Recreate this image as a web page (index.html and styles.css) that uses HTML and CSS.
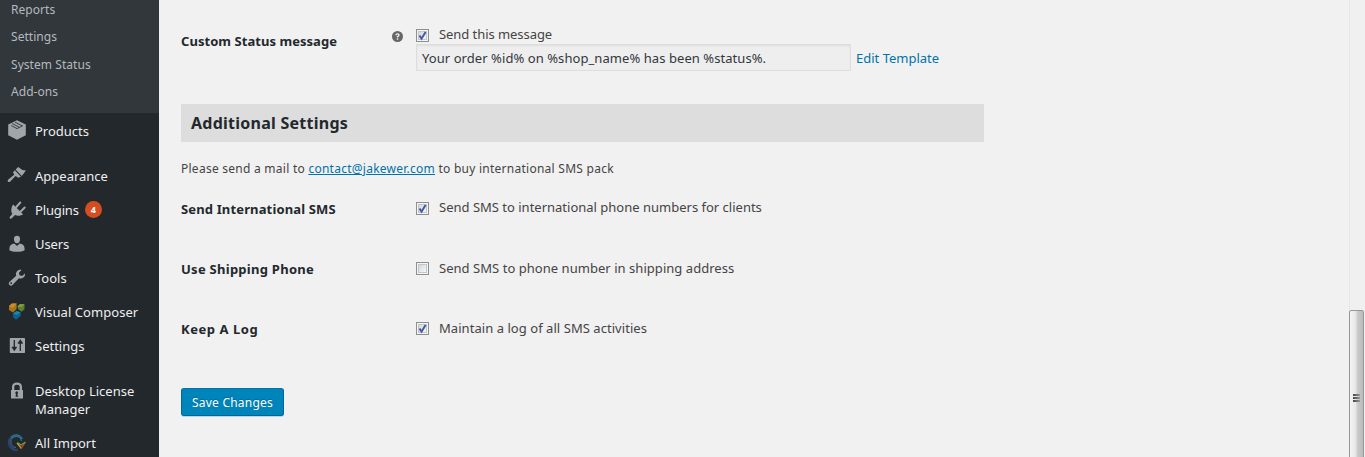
FILE: index.html
```html
<!DOCTYPE html>
<html lang="en">
<head>
<meta charset="utf-8">
<title>SMS Settings</title>
<link rel="stylesheet" href="styles.css">
</head>
<body>
<div class="page">
  <nav class="sidebar">
    <ul class="submenu">
      <li>Reports</li>
      <li>Settings</li>
      <li>System Status</li>
      <li>Add-ons</li>
    </ul>
    <ul class="menu">
      <li class="item first"><svg class="icon" viewBox="0 0 20 20"><path fill="#a0a5aa" d="M10 .3 1.2 4.600v10.600L10 19.700l8.800-4.500V4.600z"/><path fill="none" stroke="#23282d" stroke-width=".8" d="m4.300 5.600 5.700 3 6-3M5.200 3.500l7 3.700M8 2.100l7 3.700"/></svg><span class="products">Products</span></li>
      <li class="item after-gap"><svg class="icon" viewBox="0 0 20 20"><path fill="#a0a5aa" d="M11.200.9 8.600 3.500l6.200 6.500 4.100-5.600-3.500-.5zM7.800 4.300 6 6.200l1.200 2.600-5.900 4.600c-.9.900-.8 1.800-.2 2.300.6.500 1.500.4 2.200-.3L8.500 10l2.800 1.700 2.700-.9z"/></svg><span class="appearance">Appearance</span></li>
      <li class="item"><svg class="icon" viewBox="0 0 20 20"><path fill="#a0a5aa" d="M6.200 4.500 16 14.200c-1.900 1.500-5.200 2.100-8 .8l-3 3c-.7.800-1.400.8-1.900.4-.7-.5-.6-1.200 0-1.900l2.200-2.500C3.800 11.600 4 7 6.200 4.500z"/><path stroke="#a0a5aa" stroke-width="2" stroke-linecap="round" d="m9.300 7 4-4.500M13.700 11.500l4-4"/></svg><span class="plugins">Plugins</span><b class="badge">4</b></li>
      <li class="item"><svg class="icon" viewBox="0 0 20 20"><path fill="#a0a5aa" d="M10 9.300c-2 0-3.100-2.300-3.100-4.300C6.900 2.900 8.100 1.700 10 1.700S13.100 2.900 13.100 5c0 2-1.100 4.300-3.100 4.300zM7.300 9.600 10 12l2.700-2.400c3 .4 4.900 1.900 4.900 5.100v1.600c-2 1-4.600 1.500-7.600 1.500s-5.600-.5-7.600-1.500v-1.600c0-3.200 1.900-4.700 4.900-5.100z"/></svg><span class="users">Users</span></li>
      <li class="item"><svg class="icon" viewBox="0 0 20 20"><path fill="#a0a5aa" fill-rule="evenodd" d="M16.700 9.300c-1.300 1.300-3.200 1.600-4.800.9L5.500 17c-.8.800-2.100.9-3 .1-1-.9-.9-2.200-.1-3.100L9.200 7.700c-.6-1.600-.2-3.400 1-4.600 1.200-1.200 3-1.600 4.400-1.100l-2.700 2.700.6 2.600 2.700.7 2.600-2.600c.5 1.500.2 2.800-1.100 3.900zM4.800 14.400a.9.900 0 1 0-1.300 1.300.9.900 0 0 0 1.300-1.300z"/></svg><span class="tools">Tools</span></li>
      <li class="item"><svg class="icon" viewBox="0 0 20 20"><path fill="#a87518" d="m2 4 3-2.500h4.600V7L6 10.500 2 8z"/><path fill="#c98e24" d="m2 4 3-2.500h4.600L7 4.500 5.500 6z"/><path fill="#607d32" d="M10.300 4.500 13 2l4.500.3v4.900l-3 2.600-2.800-2z"/><path fill="#7da03c" d="M10.300 4.500 13 2l4.500.3-3 3z"/><path fill="#0d618a" d="M6 11.500 9.700 9l4 1.500V14L9 17.700 6 15z"/><path fill="#168aae" d="M6 11.500 9.700 9l4 1.500L10 13z"/></svg><span class="composer">Visual Composer</span></li>
      <li class="item"><svg class="icon" viewBox="0 0 20 20"><path fill="#a0a5aa" d="M3.500 2h13.800q.7 0 .7.700v13.600q0 .7-.7.700H3.500q-.7 0-.7-.7V2.700q0-.7.700-.7z"/><path fill="none" stroke="#23282d" stroke-width="1.300" d="M7.300 4v10.500M13.300 4.500V15M4.800 11.500h5M10.800 7h5M5.500 11.500l1.800 2.600 1.800-2.600M11.500 7l1.800-2.600L15.100 7"/></svg><span class="settings">Settings</span></li>
      <li class="item tall after-gap"><svg class="icon" viewBox="0 0 20 20"><path fill="#a0a5aa" fill-rule="evenodd" d="M15 9h1v8.500H4V9h1V6q0-4.500 5-4.500T15 6zM7.300 9h5.400V6q0-2.300-2.700-2.300T7.300 6zm3.500 5.800L10.400 13a1.400 1.400 0 1 0-1.400 0l-.5 2.800h3z"/></svg><span class="license">Desktop License<br>Manager</span></li>
      <li class="item"><svg class="icon" viewBox="0 0 20 20"><g fill="none"><path stroke="#27456a" stroke-width="2.400" d="M10.500 16.800A7.300 7.300 0 1 1 15.500 6"/><path stroke="#2e7387" stroke-width="1.200" d="M9 14.500A5.500 5.500 0 1 1 14.500 8M4 4.500q6-6 11 1.500"/><path stroke="#3d456f" stroke-width="1.500" d="M4.500 6q-2 6 3 9"/><path stroke="#c99d33" stroke-width="1.300" d="m10 10 4.500 5.500"/><path stroke="#c84a36" stroke-width="1.300" d="m14 15.500 4-5.800"/><path stroke="#6f9b42" stroke-width="1.300" d="M10.500 9.500 14 12l4.500-3"/></g></svg><span class="import">All Import</span></li>
    </ul>
  </nav>

  <main class="content">
    <div class="row row-status">
      <div class="label"><span class="l-status">Custom Status message</span></div>
      <svg class="help" viewBox="0 0 12 12"><circle cx="6" cy="6" r="6" fill="#666"/><path fill="none" stroke="#f1f1f1" stroke-width="1.500" d="M4.200 4.600q.2-1.500 1.800-1.500t1.700 1.300Q7.700 5.500 6 6.100v1"/><path fill="#f1f1f1" d="M5.200 8h1.600v1.500H5.200z"/></svg>
      <div class="field">
        <div class="check-line"><span class="box"><svg viewBox="0 0 13 13"><path d="m3.500 6.500 2 3.200L9.600 3"/></svg></span><span class="f-send">Send this message</span></div>
        <div class="template"><div class="input"><span class="f-order">Your order %id% on %shop_name% has been %status%.</span></div><a class="f-edit">Edit Template</a></div>
      </div>
    </div>
    <h3 class="heading"><span class="f-head">Additional Settings</span></h3>
    <p class="note"><span class="f-note">Please send a mail to <a class="mail">contact@jakewer.com</a> to buy international SMS pack</span></p>
    <div class="row">
      <div class="label"><span class="l-intl">Send International SMS</span></div>
      <div class="check-line raised"><span class="box"><svg viewBox="0 0 13 13"><path d="m3.500 6.500 2 3.200L9.600 3"/></svg></span><span class="f-intl">Send SMS to international phone numbers for clients</span></div>
    </div>
    <div class="row">
      <div class="label"><span class="l-ship">Use Shipping Phone</span></div>
      <div class="check-line"><span class="box"></span><span class="f-ship">Send SMS to phone number in shipping address</span></div>
    </div>
    <div class="row">
      <div class="label"><span class="l-log">Keep A Log</span></div>
      <div class="check-line"><span class="box"><svg viewBox="0 0 13 13"><path d="m3.500 6.500 2 3.200L9.600 3"/></svg></span><span class="f-log">Maintain a log of all SMS activities</span></div>
    </div>
    <button class="save"><span class="f-save">Save Changes</span></button>
  </main>

  <div class="scrollbar"><div class="thumb"><div class="grip"><i></i><i></i><i></i></div></div></div>
</div>
</body>
</html>
```

FILE: styles.css
```css
* { box-sizing: border-box; }
body { margin: 0; background: #f1f1f1; color: #444; font: 13px/18px "Noto Sans", "Open Sans", sans-serif; overflow: hidden; }
ul { list-style: none; margin: 0; padding: 0; }
span { white-space: nowrap; }
.page { display: flex; height: 457px; overflow: hidden; }

.sidebar { width: 159px; flex: none; background: #23282d; color: #eee; }
.submenu { height: 113px; background: #32373c; color: #b4b9be; padding-left: 11px; display: flex; flex-direction: column; font-size: 12px; overflow: hidden; letter-spacing: .05px; }
.submenu li { flex: none; height: 27.5px; line-height: 28px; }
.submenu li:first-child { height: 23.400px; line-height: 19px; }
.item { display: flex; height: 34px; padding: 8px 0 0 7px; line-height: 18px; }
.item.first { height: 35px; padding-top: 9px; }
.item.after-gap { margin-top: 11px; }
.item.tall { height: 52px; }
.icon { width: 20px; height: 20px; margin: -1px 8px 0 0; flex: none; }
.first .icon { margin-top: -2px; }
.plugins { letter-spacing: -.15px; }
.users { letter-spacing: -.1px; }
.composer { letter-spacing: .05px; }
.badge { width: 17px; height: 17px; margin-left: 6px; border-radius: 50%; background: #d54e21; color: #fff; font-size: 9px; line-height: 17px; text-align: center; }

.content { flex: 1; padding-left: 22px; }
.row { display: flex; height: 60px; }
.label { width: 235px; color: #23282d; font-weight: bold; padding-top: 1px; }
.l-status { letter-spacing: .05px; }
.l-intl { letter-spacing: .14px; }
.l-ship { letter-spacing: .27px; }
.l-log { letter-spacing: .55px; }
.check-line { display: flex; height: 18px; }
.check-line.raised > span:last-child { margin-top: -1px; }
.box { width: 13px; height: 13px; margin: 3px 10px 0 0; border: 1px solid #8e8f8f; background: linear-gradient(135deg, #c9ced8, #f6f6f6 80%); box-shadow: inset 0 0 0 1px #f4f4f4, inset 0 0 0 2px #c3c6ca; flex: none; }
.box svg { display: block; width: 13px; height: 13px; margin: -1px; }
.box path { fill: none; stroke: #4459a0; stroke-width: 2; }
.row-status { height: 104px; padding-top: 25px; }
.row-status .label { width: 210px; padding-top: 7px; }
.help { flex: none; width: 11px; height: 11px; margin: 6px 13px 0 1px; }
.row-status .box { margin-top: 4px; }
.f-send { letter-spacing: -.06px; }
.f-order { letter-spacing: .065px; }
.f-log { letter-spacing: .05px; }
.f-ship { letter-spacing: .04px; }
.template { display: flex; margin-top: 1px; align-items: center; color: #0073aa; }
.input { width: 435px; height: 27px; margin-right: 5px; padding: 4px 5px; border: 1px solid #ddd; background: #eee; box-shadow: inset 0 1px 2px rgba(0,0,0,.07); color: #32373c; }
.heading { width: 803px; height: 38px; margin: 0; padding-left: 10px; background: #ddd; color: #23282d; font-size: 16px; line-height: 38px; }
.f-head { letter-spacing: .25px; }
.note { margin: 0 0 21px; padding-top: 18px; height: 36px; font-size: 12px; }
.f-note { letter-spacing: .255px; }
.mail { color: #0073aa; text-decoration: underline; }
.save { display: block; width: 103px; height: 28px; margin-top: 9px; padding: 0; border: 1px solid #006799; border-top-color: #0073aa; border-radius: 3px; background: #0085ba; box-shadow: 0 1px 0 #bcd3df; color: #fff; font: 12px/25px "Noto Sans", sans-serif; text-shadow: 0 -1px 1px #006799; }
.f-save { letter-spacing: .23px; }

.scrollbar { width: 16px; height: 457px; padding-top: 310px; border-left: 1px solid #e7e7e7; background: #f0f0f0; }
.thumb { width: 15px; height: 170px; margin-left: -1px; border: 1px solid #979797; border-radius: 2px; background: linear-gradient(90deg, #f5f5f5, #e6e6e6 45%, #cdcdd0 55%, #b9b9bc); padding: 83px 3px 0; }
.grip { display: grid; gap: 1px; }
.grip i { height: 2px; background: linear-gradient(90deg, #444, #999); }
```
